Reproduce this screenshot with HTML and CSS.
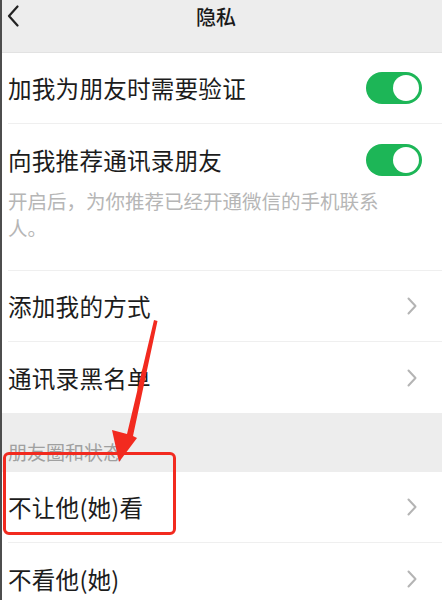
FILE: index.html
```html
<!DOCTYPE html>
<html lang="zh">
<head>
<meta charset="utf-8">
<link rel="stylesheet" href="styles.css">
</head>
<body>
<div class="page">
  <header class="nav">
    <svg class="back" width="12" height="22" viewBox="0 0 12 22"><path d="M10.5 1.5 L2 11 L10.5 20.5" fill="none" stroke="#222" stroke-width="2.2" stroke-linecap="round" stroke-linejoin="round"/></svg>
    <div class="title">隐私</div>
  </header>
  <section class="group">
    <div class="row">
      <span class="label">加我为朋友时需要验证</span>
      <span class="switch"><span class="knob"></span></span>
    </div>
    <div class="row row-desc">
      <div class="row-head">
        <span class="label">向我推荐通讯录朋友</span>
        <span class="switch"><span class="knob"></span></span>
      </div>
      <p class="desc">开启后，为你推荐已经开通微信的手机联系人。</p>
    </div>
    <div class="row">
      <span class="label">添加我的方式</span>
      <svg class="chev" width="10" height="18" viewBox="0 0 10 18"><path d="M1.5 1.5 L8.5 9 L1.5 16.5" fill="none" stroke="#b4b4b4" stroke-width="2" stroke-linecap="round" stroke-linejoin="round"/></svg>
    </div>
    <div class="row last">
      <span class="label">通讯录黑名单</span>
      <svg class="chev" width="10" height="18" viewBox="0 0 10 18"><path d="M1.5 1.5 L8.5 9 L1.5 16.5" fill="none" stroke="#b4b4b4" stroke-width="2" stroke-linecap="round" stroke-linejoin="round"/></svg>
    </div>
  </section>
  <div class="section-title">朋友圈和状态</div>
  <section class="group">
    <div class="row">
      <span class="label">不让他(她)看</span>
      <svg class="chev" width="10" height="18" viewBox="0 0 10 18"><path d="M1.5 1.5 L8.5 9 L1.5 16.5" fill="none" stroke="#b4b4b4" stroke-width="2" stroke-linecap="round" stroke-linejoin="round"/></svg>
    </div>
    <div class="row last">
      <span class="label">不看他(她)</span>
      <svg class="chev" width="10" height="18" viewBox="0 0 10 18"><path d="M1.5 1.5 L8.5 9 L1.5 16.5" fill="none" stroke="#b4b4b4" stroke-width="2" stroke-linecap="round" stroke-linejoin="round"/></svg>
    </div>
  </section>
  <div class="highlight"></div>
  <svg class="arrow" width="442" height="600" viewBox="0 0 442 600">
    <polygon points="154,320 157.5,321 133,436 137,438 119,462 112,430 127,434" fill="#f22a1f"/>
  </svg>
</div>
</body>
</html>
```
FILE: styles.css
```css
html, body {
  margin: 0;
  padding: 0;
}
body {
  width: 442px;
  height: 600px;
  overflow: hidden;
  background: #ededed;
  font-family: "Noto Sans CJK SC", "Noto Sans", sans-serif;
  color: #1c1c1c;
}
.page {
  position: relative;
  height: 600px;
  border-left: 2px solid #4d4d4d;
  box-sizing: border-box;
  background: #ededed;
}
.nav {
  height: 53px;
  box-sizing: border-box;
  border-bottom: 1px solid #e2e2e2;
  display: flex;
  align-items: flex-start;
  position: relative;
}
.back {
  margin: 5px 0 0 5px;
}
.title {
  position: absolute;
  left: 0;
  right: 12px;
  top: 2px;
  text-align: center;
  font-size: 20px;
  font-weight: 500;
  line-height: 30px;
  color: #1a1a1a;
}
.group {
  background: #fff;
}
.row {
  height: 71px;
  box-sizing: border-box;
  margin-left: 6px;
  padding-right: 20px;
  display: flex;
  align-items: center;
  justify-content: space-between;
  border-bottom: 1px solid #efefef;
}
.row.last {
  border-bottom: none;
}
.row-desc {
  height: 147px;
  flex-direction: column;
  align-items: stretch;
  justify-content: flex-start;
  padding-top: 18px;
}
.row-head {
  display: flex;
  align-items: center;
  justify-content: space-between;
  height: 36px;
}
.label {
  font-size: 23.6px;
  letter-spacing: 0.2px;
  line-height: 36px;
}
.desc {
  margin: 9px 0 0;
  max-width: 380px;
  font-size: 19.5px;
  line-height: 27px;
  color: #b6b6b6;
}
.switch {
  width: 56px;
  height: 32px;
  border-radius: 16px;
  background: #1db657;
  display: flex;
  align-items: center;
  justify-content: flex-end;
  padding: 0 3px;
  box-sizing: border-box;
  flex: none;
}
.knob {
  width: 26px;
  height: 26px;
  border-radius: 50%;
  background: #fff;
}
.chev {
  margin-right: 5px;
  flex: none;
}
.section-title {
  height: 59px;
  box-sizing: border-box;
  padding: 26px 0 0 6px;
  font-size: 19px;
  line-height: 26px;
  color: #a0a0a0;
}
.highlight {
  position: absolute;
  left: 1px;
  top: 452px;
  width: 173px;
  height: 83px;
  box-sizing: border-box;
  border: 3px solid #f22a1f;
  border-radius: 6px;
}
.arrow {
  position: absolute;
  left: -2px;
  top: 0;
  pointer-events: none;
}
```
